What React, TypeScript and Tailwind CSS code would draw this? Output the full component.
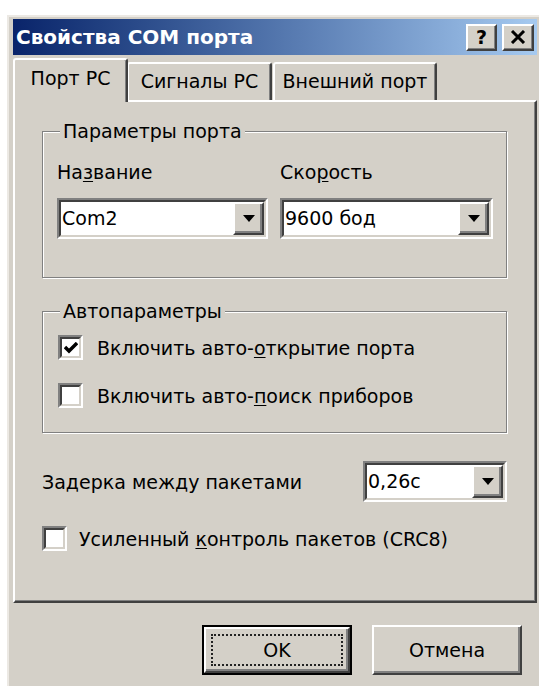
import { ReactNode } from "react"

const font = { fontFamily: '"DejaVu Sans", "Liberation Sans", sans-serif' }

function Combo({ value, width }: { value: string; width: string }) {
  return (
    <div
      className={`${width} h-[41px] flex bg-white border-2 border-t-[#808080] border-l-[#808080] border-b-white border-r-white`}
    >
      <div className="flex-1 flex border-2 border-t-[#404040] border-l-[#404040] border-b-[#d4d0c8] border-r-[#d4d0c8]">
        <div className="flex-1 flex items-center pl-[1px] text-[19px] leading-none text-black">
          {value}
        </div>
        <div className="w-[31px] h-full flex items-center justify-center bg-[#d4d0c8] border-2 border-t-white border-l-white border-b-[#404040] border-r-[#404040] shadow-[inset_-2px_-2px_0_#808080]">
          <svg width="12" height="7" viewBox="0 0 12 7">
            <path d="M0 0h12L6 7z" fill="#000" />
          </svg>
        </div>
      </div>
    </div>
  )
}

function Check({ checked }: { checked?: boolean }) {
  return (
    <div className="w-[25px] h-[25px] shrink-0 flex border-2 border-t-[#808080] border-l-[#808080] border-b-white border-r-white">
      <div className="flex-1 flex items-center justify-center bg-white border-2 border-t-[#404040] border-l-[#404040] border-b-[#d4d0c8] border-r-[#d4d0c8]">
        {checked && (
          <svg width="14" height="12" viewBox="0 0 14 12">
            <path d="M1 5l4 4 8-8" stroke="#000" strokeWidth="3.4" fill="none" />
          </svg>
        )}
      </div>
    </div>
  )
}

function Group({
  title,
  className,
  children,
}: {
  title: string
  className: string
  children: ReactNode
}) {
  return (
    <div
      className={`relative ml-[27px] w-[465px] border border-[#808080] shadow-[inset_1px_1px_0_#fff,1px_1px_0_#fff] ${className}`}
    >
      <span className="absolute left-[17px] -top-[13px] px-[3px] bg-[#d4d0c8] text-[19px] leading-[24px]">
        {title}
      </span>
      {children}
    </div>
  )
}

function Tab({
  children,
  className,
  active,
}: {
  children: ReactNode
  className: string
  active?: boolean
}) {
  return (
    <div
      className={`flex justify-center rounded-t-[3px] bg-[#d4d0c8] border-t-2 border-l-2 border-r-2 border-t-white border-l-white border-r-[#404040] shadow-[inset_-1px_0_0_#808080] text-[19px] leading-none ${
        active ? "relative z-10 h-[44px] self-start pt-[9px]" : "h-[38px] pt-[8px]"
      } ${className}`}
    >
      {children}
    </div>
  )
}

function Button({ children, primary }: { children: ReactNode; primary?: boolean }) {
  if (primary) {
    return (
      <div className="w-[150px] h-[50px] flex border-2 border-black">
        <div className="flex-1 flex p-[5px] border-2 border-t-white border-l-white border-b-[#404040] border-r-[#404040] shadow-[inset_-2px_-2px_0_#808080]">
          <div className="flex-1 flex items-center justify-center border-2 border-dotted border-[#222] text-[19px]">
            {children}
          </div>
        </div>
      </div>
    )
  }
  return (
    <div className="w-[150px] h-[50px] flex items-center justify-center border-2 border-t-white border-l-white border-b-[#404040] border-r-[#404040] shadow-[inset_-2px_-2px_0_#808080] text-[19px]">
      {children}
    </div>
  )
}

export default function App() {
  return (
    <div className="w-[539px] h-[686px] bg-white overflow-hidden text-black" style={font}>
      <div className="mt-[15px] ml-[7px] w-[532px] h-[680px] bg-[#d4d0c8] border-t-2 border-l-2 border-[#ece9e4] pt-[2px] pl-[4px] pr-[2px]">
        {/* caption */}
        <div className="h-[36px] flex items-center bg-gradient-to-r from-[#0a246a] to-[#a6caf0] pl-[3px] pr-[3px]">
          <span className="flex-1 text-white font-bold text-[20px] leading-none">
            Свойства COM порта
          </span>
          <div className="w-[31px] h-[27px] flex items-center justify-center bg-[#d4d0c8] border-2 border-t-white border-l-white border-b-[#404040] border-r-[#404040] shadow-[inset_-1px_-1px_0_#808080] font-bold text-[19px] leading-none">
            ?
          </div>
          <div className="ml-[5px] w-[32px] h-[27px] flex items-center justify-center bg-[#d4d0c8] border-2 border-t-white border-l-white border-b-[#404040] border-r-[#404040] shadow-[inset_-1px_-1px_0_#808080]">
            <svg width="16" height="14" viewBox="0 0 16 14">
              <path d="M2 1l12 12M14 1L2 13" stroke="#000" strokeWidth="3" />
            </svg>
          </div>
        </div>

        {/* tabs */}
        <div className="mt-[3px] h-[42px] flex items-end">
          <Tab active className="w-[115px]">
            Порт PC
          </Tab>
          <Tab className="w-[145px] -ml-[1px]">Сигналы PC</Tab>
          <Tab className="w-[164px] ml-[1px]">Внешний порт</Tab>
        </div>

        <div className="h-[503px] border-t-2 border-l-2 border-t-white border-l-white border-b-2 border-r-2 border-b-[#404040] border-r-[#404040] shadow-[inset_-1px_-1px_0_#808080] text-[19px] leading-[24px]">
          <Group title="Параметры порта" className="mt-[29px] h-[147px] pt-[28px] px-[14px]">
            <div className="flex gap-[12px]">
              <div className="w-[211px]">
                <div>
                  На<u className="underline-offset-2">з</u>вание
                </div>
                <div className="mt-[14px]">
                  <Combo value="Com2" width="w-[211px]" />
                </div>
              </div>
              <div className="w-[213px]">
                <div>
                  Ско<u className="underline-offset-2">р</u>ость
                </div>
                <div className="mt-[14px]">
                  <Combo value="9600 бод" width="w-[213px]" />
                </div>
              </div>
            </div>
          </Group>

          <Group title="Автопараметры" className="mt-[33px] h-[122px] pt-[23px] pl-[15px]">
            <div className="flex items-center gap-[14px]">
              <Check checked />
              <span>
                Включить авто-<u className="underline-offset-2">о</u>ткрытие порта
              </span>
            </div>
            <div className="mt-[23px] flex items-center gap-[14px]">
              <Check />
              <span>
                Включить авто-<u className="underline-offset-2">п</u>оиск приборов
              </span>
            </div>
          </Group>

          <div className="mt-[28px] ml-[27px] w-[465px] flex items-center justify-between">
            <span>
              За<u className="underline-offset-2">д</u>ерка между пакетами
            </span>
            <Combo value="0,26с" width="w-[144px]" />
          </div>

          <div className="mt-[24px] ml-[27px] flex items-center gap-[12px]">
            <Check />
            <span>
              Усиленный <u className="underline-offset-2">к</u>онтроль пакетов (CRC8)
            </span>
          </div>
        </div>

        <div className="mt-[22px] flex justify-end gap-[20px] pr-[15px]">
          <Button primary>OK</Button>
          <Button>Отмена</Button>
        </div>
      </div>
    </div>
  )
}
